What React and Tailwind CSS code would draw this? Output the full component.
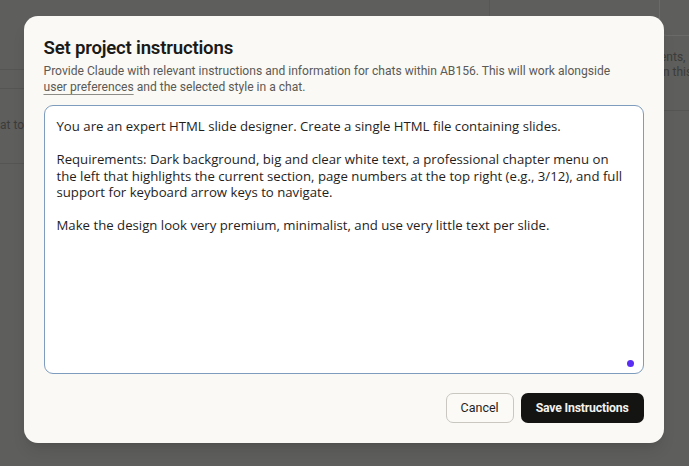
import React, { useState } from 'react'

const text = `You are an expert HTML slide designer. Create a single HTML file containing slides.

Requirements: Dark background, big and clear white text, a professional chapter menu on the left that highlights the current section, page numbers at the top right (e.g., 3/12), and full support for keyboard arrow keys to navigate.

Make the design look very premium, minimalist, and use very little text per slide.`

const App = () => {
  const [value, setValue] = useState(text)

  return (
    <div className="relative h-[466px] w-full overflow-hidden bg-[#5e5e5c] font-['Roboto',sans-serif]">
      {/* dimmed page underneath */}
      <div className="flex h-full">
        <div className="w-[40px] shrink-0">
          <div className="mt-[69px] h-[20px] border-y border-[#555553]" />
          <div className="mt-[28px] text-[12px] leading-[16px] text-[#3c3c3a]">at to</div>
          <div className="mt-[30px] border-t border-[#555553]" />
        </div>
        <div className="flex-1" />
        <div className="w-[200px] shrink-0 border-l border-[#575755] h-[40px]" />
      </div>
      <div className="absolute right-0 top-0 w-[30px]">
        <div className="h-[36px] rounded-bl-lg border-b border-l border-[#6a6a68]" />
        <div className="mt-[14px] pl-[1px] text-[12px] leading-[15px] text-[#3c3c3a] whitespace-nowrap">
          <div>ents,</div>
          <div>in this</div>
        </div>
        <div className="mt-[30px] border-t border-[#555553]" />
      </div>

      {/* modal */}
      <div className="absolute inset-0 flex items-start justify-center pt-[16px]">
        <div className="w-[640px] -translate-x-[1px] rounded-[14px] bg-[#faf9f6] px-[20px] pt-[21px] pb-[20px] shadow-lg">
          <h2 className="text-[18.6px] font-semibold leading-[23px] text-[#1a1a18] tracking-[-0.2px]">
            Set project instructions
          </h2>
          <p className="mt-[4px] pr-[24px] text-[12.1px] leading-[15.5px] text-[#5b5a55]">
            Provide Claude with relevant instructions and information for chats within AB156. This will work alongside{' '}
            <span className="underline decoration-[#8d8c86] underline-offset-[3px]">user preferences</span> and the selected style in a chat.
          </p>
          <div className="relative mt-[10px]">
            <textarea
              value={value}
              onChange={e => setValue(e.target.value)}
              className="block h-[269px] w-full resize-none rounded-[9px] border border-[#7e9cbd] bg-white px-[12px] pt-[12px] font-['Open_Sans',sans-serif] text-[13.2px] leading-[16.5px] text-[#1f1e1d] outline-none"
            />
            <span className="absolute bottom-[7px] right-[10px] h-[7px] w-[7px] rounded-full bg-[#5a2df4]" />
          </div>
          <div className="mt-[19px] flex justify-end gap-[7px]">
            <button className="h-[30px] rounded-[7px] border border-[#c9c7c0] bg-[#fbfaf7] px-[14px] text-[12.5px] text-[#1f1e1d]">
              Cancel
            </button>
            <button className="h-[30px] rounded-[7px] bg-[#141413] px-[15px] text-[12.3px] font-bold tracking-[-0.2px] text-[#f3f2ee]">
              Save Instructions
            </button>
          </div>
        </div>
      </div>
    </div>
  )
}

export default App
